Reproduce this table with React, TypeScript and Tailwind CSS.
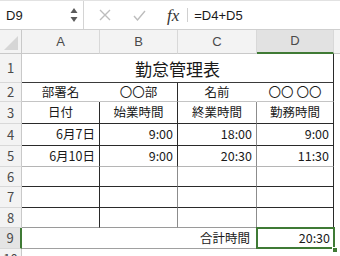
import { FC } from 'react';

type Cell = {
    text?: string;
    span?: number;
    align?: 'left' | 'center' | 'right';
    right?: string;
    extra?: string;
};

type RowDef = {
    num: string;
    h: string;
    bottom: string;
    cells: Cell[];
    selected?: boolean;
};

const DARK = 'border-r-[#2a2a2a]';
const MID = 'border-r-[#8c8c8c]';
const NONE = 'border-r-transparent';

const rows: RowDef[] = [
    {
        num: '1',
        h: 'h-[29px]',
        bottom: 'border-b-[#3a3a3a]',
        cells: [{ text: '勤怠管理表', span: 4, align: 'center', right: DARK, extra: 'text-[17px]' }],
    },
    {
        num: '2',
        h: 'h-[19px]',
        bottom: 'border-b-[#c4c4c4]',
        cells: [
            { text: '部署名', align: 'center', right: NONE },
            { text: '〇〇部', align: 'center', right: DARK },
            { text: '名前', align: 'center', right: NONE },
            { text: '〇〇 〇〇', align: 'center', right: DARK },
        ],
    },
    {
        num: '3',
        h: 'h-[22px]',
        bottom: 'border-b-[#2a2a2a]',
        cells: [
            { text: '日付', align: 'center', right: DARK },
            { text: '始業時間', align: 'center', right: DARK },
            { text: '終業時間', align: 'center', right: MID },
            { text: '勤務時間', align: 'center', right: DARK },
        ],
    },
    {
        num: '4',
        h: 'h-[22px]',
        bottom: 'border-b-[#2a2a2a]',
        cells: [
            { text: '6月7日', align: 'right', right: DARK },
            { text: '9:00', align: 'right', right: DARK },
            { text: '18:00', align: 'right', right: MID },
            { text: '9:00', align: 'right', right: DARK },
        ],
    },
    {
        num: '5',
        h: 'h-[21px]',
        bottom: 'border-b-[#b5b5b5]',
        cells: [
            { text: '6月10日', align: 'right', right: DARK },
            { text: '9:00', align: 'right', right: DARK },
            { text: '20:30', align: 'right', right: MID },
            { text: '11:30', align: 'right', right: DARK },
        ],
    },
    ...['6', '7', '8'].map((n, i) => ({
        num: n,
        h: i === 1 ? 'h-[21px]' : 'h-[20px]',
        bottom: i === 2 ? 'border-b-[#9a9a9a]' : 'border-b-[#2a2a2a]',
        cells: [{ right: DARK }, { right: MID }, { right: MID }, { right: DARK }],
    })),
    {
        num: '9',
        h: 'h-[21px]',
        bottom: 'border-b-[#a0a0a0]',
        selected: true,
        cells: [{ text: '合計時間', span: 3, align: 'right', right: NONE, extra: 'pr-[6px]' }],
    },
];

const widths = ['w-[78px]', 'w-[78px]', 'w-[79px]', 'w-[77px]'];
const spanWidths: Record<number, string> = { 1: 'w-[78px]', 3: 'w-[235px]', 4: 'w-[312px]' };

const RowHeader: FC<{ num: string; selected?: boolean; h: string }> = ({ num, selected, h }) => (
    <div
        className={`${h} w-[22px] shrink-0 flex items-center justify-center text-[13px] text-[#4a4a4a] border-b border-b-[#d8d8d8] ${
            selected ? 'bg-[#e4e4e4] border-r-2 border-r-[#3f7a35]' : 'bg-[#f3f3f3] border-r border-r-[#c9c9c9]'
        }`}
    >
        {num}
    </div>
);

const App: FC = () => {
    return (
        <div className="w-[340px] h-[256px] overflow-hidden bg-white text-[#1a1a1a]" style={{ fontFamily: '"Noto Sans CJK JP", "Noto Sans", sans-serif' }}>
            {/* formula bar */}
            <div className="flex h-[30px] border-t border-t-[#e2e2e2] border-b border-b-[#cfcfcf] items-center">
                <div className="w-[84px] h-full flex items-center justify-between border-r border-r-[#d4d4d4] pl-[6px] pr-[5px]">
                    <span className="text-[13px] leading-none" style={{ fontFamily: '"Liberation Sans", sans-serif' }}>D9</span>
                    <svg width="8" height="16" viewBox="0 0 8 16">
                        <polygon points="4,1 7.5,6 0.5,6" fill="#5a5a5a" />
                        <polygon points="0.5,10 7.5,10 4,15" fill="#5a5a5a" />
                    </svg>
                </div>
                <div className="flex items-center h-full pl-[15px] gap-[22px]">
                    <svg width="12" height="12" viewBox="0 0 12 12">
                        <path d="M1 1 L11 11 M11 1 L1 11" stroke="#bdbdbd" strokeWidth="1.4" />
                    </svg>
                    <svg width="13" height="11" viewBox="0 0 13 11">
                        <path d="M1 6 L4.5 10 L12 1" stroke="#bdbdbd" strokeWidth="1.4" fill="none" />
                    </svg>
                    <span className="italic text-[17px] text-[#333] leading-none -ml-[1px]" style={{ fontFamily: '"Liberation Serif", serif' }}>
                        fx
                    </span>
                </div>
                <div className="ml-[8px] w-px h-[14px] bg-[#d0d0d0]" />
                <span className="ml-[6px] text-[13px] leading-none" style={{ fontFamily: '"Liberation Sans", sans-serif' }}>=D4+D5</span>
            </div>

            {/* column headers */}
            <div className="flex h-[24px]">
                <div className="w-[22px] shrink-0 bg-[#f3f3f3] border-r border-r-[#c9c9c9] border-b border-b-[#c9c9c9] flex items-end justify-end p-[3px]">
                    <svg width="14" height="14" viewBox="0 0 14 14">
                        <polygon points="14,0 14,14 0,14" fill="#d6d6d6" />
                    </svg>
                </div>
                {['A', 'B', 'C', 'D'].map((c, i) => (
                    <div
                        key={c}
                        className={`${widths[i]} shrink-0 flex items-center justify-center text-[13px] text-[#4a4a4a] border-r border-r-[#d8d8d8] ${
                            c === 'D' ? 'bg-[#e2e2e2] border-b-2 border-b-[#3f7a35]' : 'bg-[#f3f3f3] border-b border-b-[#c9c9c9]'
                        }`}
                        style={{ fontFamily: '"Liberation Sans", sans-serif' }}
                    >
                        {c}
                    </div>
                ))}
                <div className="flex-1 bg-[#f3f3f3] border-b border-b-[#c9c9c9]" />
            </div>

            {rows.map(row => (
                <div key={row.num} className="flex">
                    <RowHeader num={row.num} selected={row.selected} h={row.h} />
                    {row.cells.map((cell, i) => {
                        const w = cell.span ? spanWidths[cell.span] : widths[i];
                        const justify = cell.align === 'center' ? 'justify-center' : cell.align === 'right' ? 'justify-end pr-[4px]' : 'justify-start pl-[4px]';
                        return (
                            <div
                                key={i}
                                className={`${w} ${row.h} shrink-0 flex items-center ${justify} border-r border-b ${cell.right} ${row.bottom} text-[12.5px] leading-none ${cell.extra ?? ''}`}
                            >
                                {cell.text}
                            </div>
                        );
                    })}
                    {row.selected && (
                        <div className={`w-[77px] ${row.h} shrink-0 relative`}>
                            <div className="absolute -left-px -top-px w-[79px] h-[22px] border-2 border-[#3f7a35] flex items-center justify-end pr-[3px] text-[12.5px] leading-none">
                                20:30
                            </div>
                            <div className="absolute -right-[4px] -bottom-[4px] w-[6px] h-[6px] bg-[#3f7a35] border border-white" />
                        </div>
                    )}
                </div>
            ))}
            <div className="flex">
                <RowHeader num="10" h="h-[21px]" />
            </div>
        </div>
    );
};

export default App;
